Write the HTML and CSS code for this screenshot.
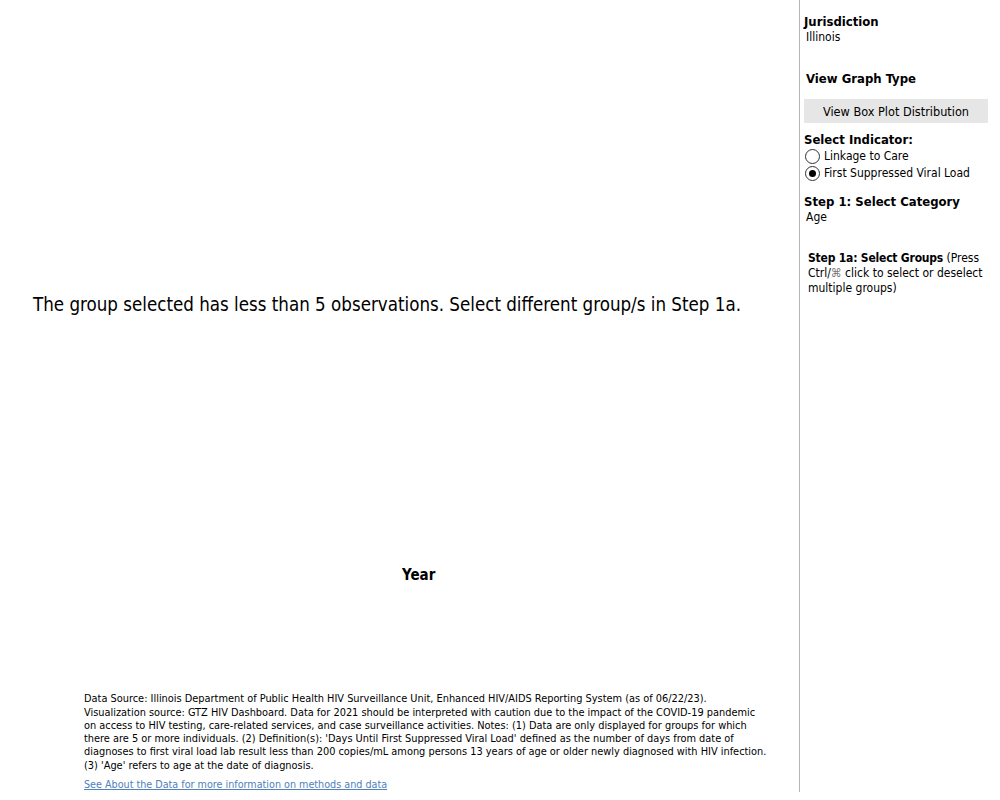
FILE: index.html
```html
<!DOCTYPE html>
<html>
<head>
<meta charset="utf-8">
<link rel="stylesheet" href="styles.css">
</head>
<body>
<div class="page">
  <main class="main">
    <div class="chart">
      <p class="message">The group selected has less than 5 observations. Select different group/s in Step 1a.</p>
      <div class="xlabel">Year</div>
    </div>
    <div class="notes">
      <p class="note-text">Data Source: Illinois Department of Public Health HIV Surveillance Unit, Enhanced HIV/AIDS Reporting System (as of 06/22/23).<br>Visualization source: GTZ HIV Dashboard. Data for 2021 should be interpreted with caution due to the impact of the COVID-19 pandemic<br>on access to HIV testing, care-related services, and case surveillance activities. Notes: (1) Data are only displayed for groups for which<br>there are 5 or more individuals. (2) Definition(s): 'Days Until First Suppressed Viral Load' defined as the number of days from date of<br>diagnoses to first viral load lab result less than 200 copies/mL among persons 13 years of age or older newly diagnosed with HIV infection.<br>(3) 'Age' refers to age at the date of diagnosis.</p>
      <a class="note-link" href="#">See About the Data for more information on methods and data</a>
    </div>
  </main>
  <aside class="sidebar">
    <section class="block">
      <h3 class="label">Jurisdiction</h3>
      <div class="value">Illinois</div>
    </section>
    <section class="block graph-type">
      <h3 class="label label-indent">View Graph Type</h3>
      <button class="btn">View Box Plot Distribution</button>
    </section>
    <section class="block indicator">
      <h3 class="label">Select Indicator:</h3>
      <label class="radio"><input type="radio" name="ind"><span>Linkage to Care</span></label>
      <label class="radio"><input type="radio" name="ind" checked><span>First Suppressed Viral Load</span></label>
    </section>
    <section class="block category">
      <h3 class="label">Step 1: Select Category</h3>
      <div class="value">Age</div>
    </section>
    <section class="block groups">
      <p class="groups-text"><b>Step 1a: Select Groups</b> (Press Ctrl/<span class="cmd">&#8984;</span> click to select or deselect multiple groups)</p>
    </section>
  </aside>
</div>
</body>
</html>
```
FILE: styles.css
```css
html, body {
  margin: 0;
  padding: 0;
  background: #fff;
}
body {
  font-family: Tahoma, "DejaVu Sans Condensed", "DejaVu Sans", sans-serif;
  color: #000;
}
.page {
  display: flex;
  width: 1000px;
  height: 800px;
}
.main {
  width: 799px;
  flex: none;
  display: flex;
  flex-direction: column;
  border-right: 1px solid #b5b5b5;
  height: 792px;
}
.chart {
  height: 686px;
  display: flex;
  flex-direction: column;
}
.message {
  margin: 293px 0 0 33px;
  font-size: 18.6px;
  line-height: 24px;
}
.xlabel {
  margin: 248px 0 0 0;
  padding-left: 402px;
  font-size: 15px;
  font-weight: bold;
  line-height: 20px;
}
.notes {
  padding: 7px 0 0 84px;
  width: 700px;
}
.note-text {
  margin: 0;
  font-size: 10.9px;
  line-height: 13.3px;
  white-space: nowrap;
}
.note-link {
  display: inline-block;
  margin-top: 6px;
  font-size: 10.7px;
  line-height: 13px;
  color: #4f81bd;
  text-decoration: underline;
}
.sidebar {
  flex: 1;
  padding: 14px 12px 0 4px;
  display: flex;
  flex-direction: column;
}
.block {
  margin: 0;
}
.label {
  margin: 0;
  font-size: 13px;
  font-weight: bold;
  line-height: 16px;
}
.label-indent {
  margin-left: 2px;
}
.value {
  font-size: 12px;
  line-height: 15px;
  margin-left: 2px;
}
.graph-type {
  margin-top: 26px;
}
.btn {
  display: block;
  margin-top: 12px;
  width: 184px;
  height: 24px;
  border: none;
  background: #e6e6e6;
  font-family: inherit;
  font-size: 12.6px;
  color: #000;
  padding: 0;
}
.indicator {
  margin-top: 9px;
}
.category {
  margin-top: 12px;
}
.radio {
  display: flex;
  align-items: center;
  font-size: 12px;
  line-height: 17px;
}
.radio input {
  appearance: none;
  -webkit-appearance: none;
  width: 15px;
  height: 15px;
  margin: 0 4px 0 1px;
  border: 1px solid #333;
  border-radius: 50%;
  background: #fff;
  position: relative;
  box-sizing: border-box;
}
.radio input:checked::after {
  content: "";
  position: absolute;
  left: 3px;
  top: 3px;
  width: 7px;
  height: 7px;
  border-radius: 50%;
  background: #000;
}
.groups {
  margin-top: 26px;
  padding-left: 4px;
}
.groups-text {
  margin: 0;
  font-size: 12px;
  line-height: 15px;
}
.groups-text b {
  font-size: 12px;
  letter-spacing: -0.2px;
}
.cmd {
  color: #777;
}
```
